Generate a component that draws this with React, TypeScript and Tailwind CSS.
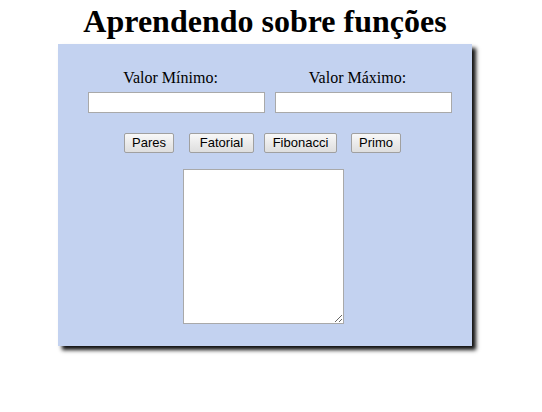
const buttons = [
  { label: "Pares", w: "w-[50px]", ml: "ml-0" },
  { label: "Fatorial", w: "w-[65px]", ml: "ml-[15px]" },
  { label: "Fibonacci", w: "w-[73px]", ml: "ml-[10px]" },
  { label: "Primo", w: "w-[50px]", ml: "ml-[14px]" },
]

export default function App() {
  return (
    <div className="w-[542px] h-[412px] bg-white font-['Liberation_Serif',serif] text-black">
      <div className="w-[530px] flex flex-col items-center">
        {/* Title */}
        <h1 className="text-[32px] leading-[37px] font-bold mt-[3px]">Aprendendo sobre funções</h1>

        {/* Panel */}
        <div className="mt-[4px] w-[414px] h-[302px] bg-[#c3d2f0] shadow-[4px_4px_4px_#111] flex flex-col">
          <div className="mt-[25px] pl-[30px] flex gap-[10px]">
            <div className="w-[177px] flex flex-col items-center">
              <label className="pr-[12px] text-[16px] leading-[18px]">Valor Mínimo:</label>
              <input className="mt-[5px] w-[177px] h-[21px] bg-white border border-[#a9a9a9] outline-none" />
            </div>
            <div className="w-[177px] flex flex-col items-center">
              <label className="pr-[12px] text-[16px] leading-[18px]">Valor Máximo:</label>
              <input className="mt-[5px] w-[177px] h-[21px] bg-white border border-[#a9a9a9] outline-none" />
            </div>
          </div>

          <div className="mt-[20px] pl-[66px] flex">
            {buttons.map((b) => (
              <button
                key={b.label}
                className={`${b.w} ${b.ml} h-[20px] text-[13px] leading-[16px] font-['Liberation_Sans',Arial,sans-serif] border border-[#a0a0a0] rounded-[2px] bg-gradient-to-b from-[#f8f8f8] to-[#dedede]`}
              >
                {b.label}
              </button>
            ))}
          </div>

          <div className="mt-[16px] pl-[125px] flex">
            <textarea className="w-[161px] h-[155px] bg-white border border-[#a9a9a9] outline-none" />
          </div>
        </div>
      </div>
    </div>
  )
}
